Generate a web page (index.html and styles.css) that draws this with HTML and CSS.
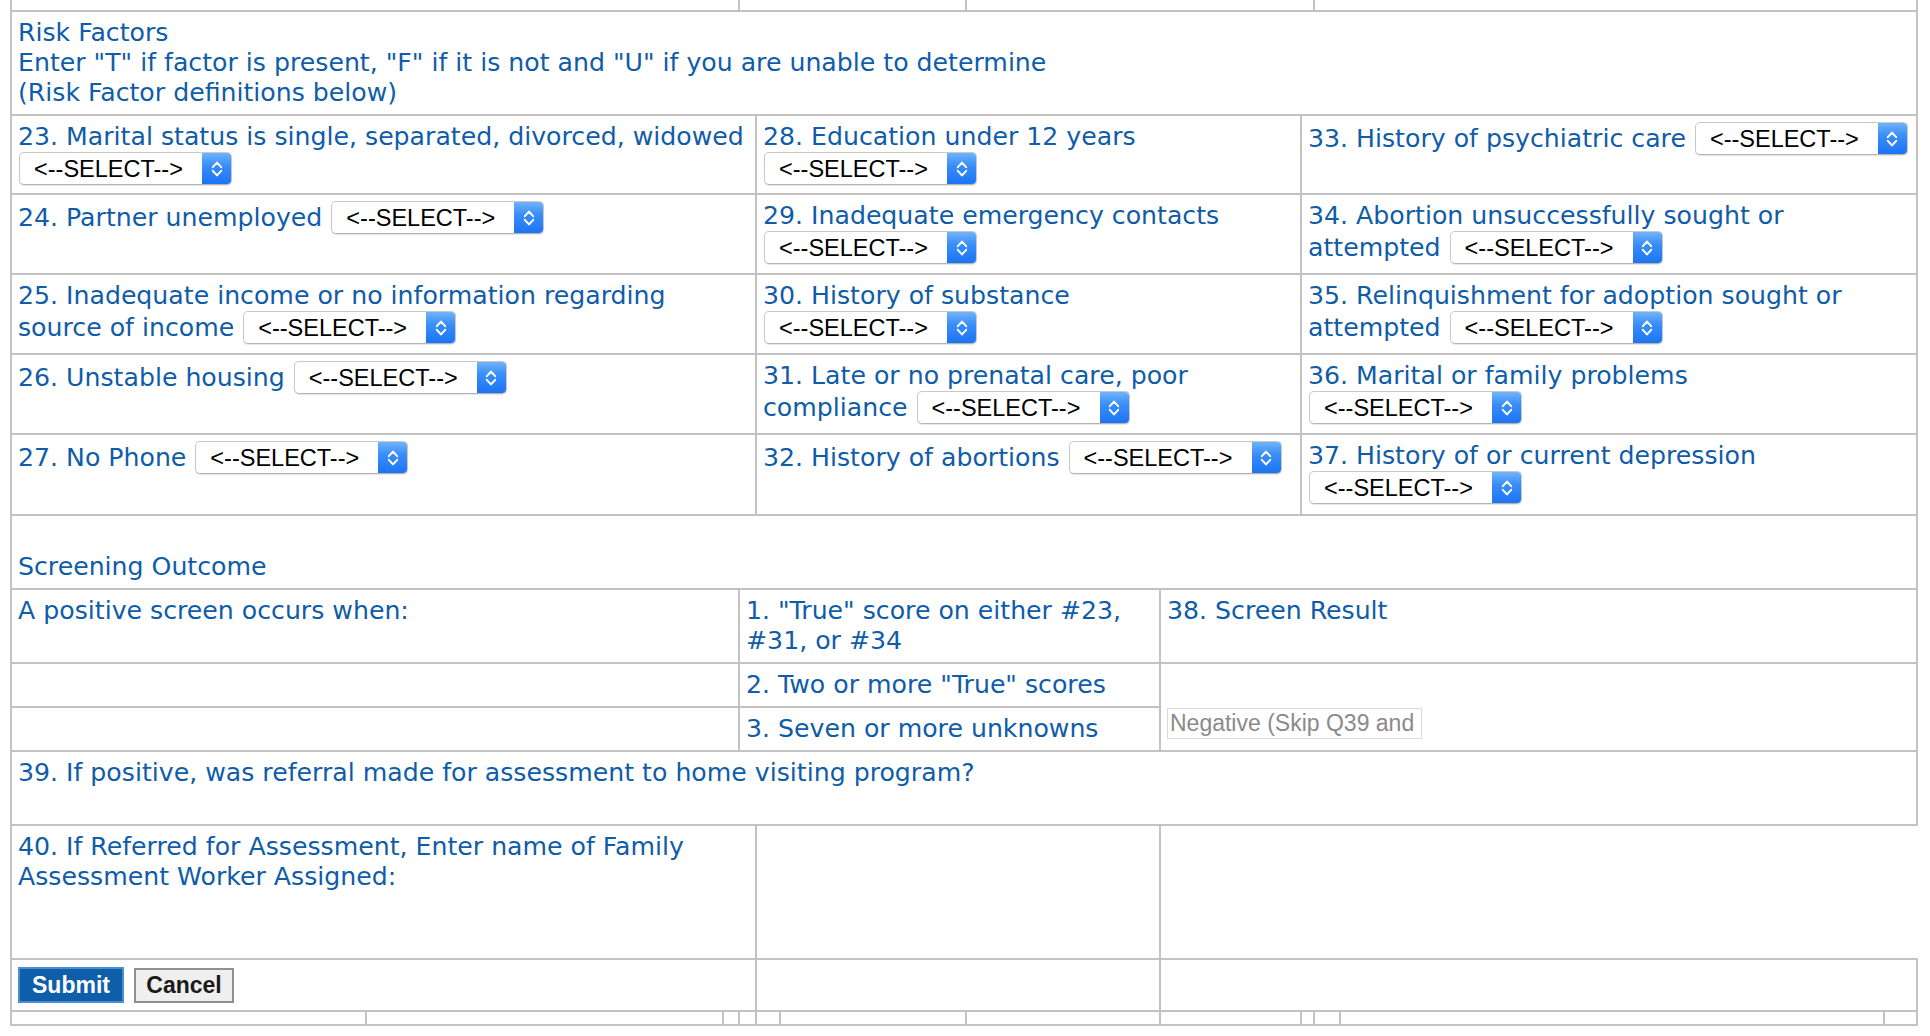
FILE: index.html
```html
<!DOCTYPE html>
<html lang="en">
<head>
<meta charset="utf-8">
<title>Risk Factors</title>
<link rel="stylesheet" href="styles.css">
</head>
<body>
<form class="page">
  <div class="sheet">
    <div class="cell edge top-a"></div>
    <div class="cell edge top-b"></div>
    <div class="cell edge top-c"></div>
    <div class="cell edge top-d"></div>

    <div class="cell full">Risk Factors<br>Enter "T" if factor is present, "F" if it is not and "U" if you are unable to determine<br>(Risk Factor definitions below)</div>

    <div class="cell risk-a">23. Marital status is single, separated, divorced, widowed<br><span class="pick"><select class="pick-input"><option>&lt;--SELECT--&gt;</option></select><span class="pick-btn"><svg class="chev" viewBox="0 0 12 22" width="12" height="22"><path d="M1.8 9.2 6 4.6l4.2 4.6M1.8 12.8 6 17.4l4.2-4.6" fill="none" stroke="#fff" stroke-width="2" stroke-linecap="round" stroke-linejoin="round"/></svg></span></span></div>
    <div class="cell risk-b">28. Education under 12 years<br><span class="pick"><select class="pick-input"><option>&lt;--SELECT--&gt;</option></select><span class="pick-btn"><svg class="chev" viewBox="0 0 12 22" width="12" height="22"><path d="M1.8 9.2 6 4.6l4.2 4.6M1.8 12.8 6 17.4l4.2-4.6" fill="none" stroke="#fff" stroke-width="2" stroke-linecap="round" stroke-linejoin="round"/></svg></span></span></div>
    <div class="cell risk-c">33. History of psychiatric care <span class="pick"><select class="pick-input"><option>&lt;--SELECT--&gt;</option></select><span class="pick-btn"><svg class="chev" viewBox="0 0 12 22" width="12" height="22"><path d="M1.8 9.2 6 4.6l4.2 4.6M1.8 12.8 6 17.4l4.2-4.6" fill="none" stroke="#fff" stroke-width="2" stroke-linecap="round" stroke-linejoin="round"/></svg></span></span></div>

    <div class="cell risk-a">24. Partner unemployed <span class="pick"><select class="pick-input"><option>&lt;--SELECT--&gt;</option></select><span class="pick-btn"><svg class="chev" viewBox="0 0 12 22" width="12" height="22"><path d="M1.8 9.2 6 4.6l4.2 4.6M1.8 12.8 6 17.4l4.2-4.6" fill="none" stroke="#fff" stroke-width="2" stroke-linecap="round" stroke-linejoin="round"/></svg></span></span></div>
    <div class="cell risk-b">29. Inadequate emergency contacts<br><span class="pick"><select class="pick-input"><option>&lt;--SELECT--&gt;</option></select><span class="pick-btn"><svg class="chev" viewBox="0 0 12 22" width="12" height="22"><path d="M1.8 9.2 6 4.6l4.2 4.6M1.8 12.8 6 17.4l4.2-4.6" fill="none" stroke="#fff" stroke-width="2" stroke-linecap="round" stroke-linejoin="round"/></svg></span></span></div>
    <div class="cell risk-c">34. Abortion unsuccessfully sought or<br>attempted <span class="pick"><select class="pick-input"><option>&lt;--SELECT--&gt;</option></select><span class="pick-btn"><svg class="chev" viewBox="0 0 12 22" width="12" height="22"><path d="M1.8 9.2 6 4.6l4.2 4.6M1.8 12.8 6 17.4l4.2-4.6" fill="none" stroke="#fff" stroke-width="2" stroke-linecap="round" stroke-linejoin="round"/></svg></span></span></div>

    <div class="cell risk-a">25. Inadequate income or no information regarding<br>source of income <span class="pick"><select class="pick-input"><option>&lt;--SELECT--&gt;</option></select><span class="pick-btn"><svg class="chev" viewBox="0 0 12 22" width="12" height="22"><path d="M1.8 9.2 6 4.6l4.2 4.6M1.8 12.8 6 17.4l4.2-4.6" fill="none" stroke="#fff" stroke-width="2" stroke-linecap="round" stroke-linejoin="round"/></svg></span></span></div>
    <div class="cell risk-b">30. History of substance<br><span class="pick"><select class="pick-input"><option>&lt;--SELECT--&gt;</option></select><span class="pick-btn"><svg class="chev" viewBox="0 0 12 22" width="12" height="22"><path d="M1.8 9.2 6 4.6l4.2 4.6M1.8 12.8 6 17.4l4.2-4.6" fill="none" stroke="#fff" stroke-width="2" stroke-linecap="round" stroke-linejoin="round"/></svg></span></span></div>
    <div class="cell risk-c">35. Relinquishment for adoption sought or<br>attempted <span class="pick"><select class="pick-input"><option>&lt;--SELECT--&gt;</option></select><span class="pick-btn"><svg class="chev" viewBox="0 0 12 22" width="12" height="22"><path d="M1.8 9.2 6 4.6l4.2 4.6M1.8 12.8 6 17.4l4.2-4.6" fill="none" stroke="#fff" stroke-width="2" stroke-linecap="round" stroke-linejoin="round"/></svg></span></span></div>

    <div class="cell risk-a">26. Unstable housing <span class="pick"><select class="pick-input"><option>&lt;--SELECT--&gt;</option></select><span class="pick-btn"><svg class="chev" viewBox="0 0 12 22" width="12" height="22"><path d="M1.8 9.2 6 4.6l4.2 4.6M1.8 12.8 6 17.4l4.2-4.6" fill="none" stroke="#fff" stroke-width="2" stroke-linecap="round" stroke-linejoin="round"/></svg></span></span></div>
    <div class="cell risk-b">31. Late or no prenatal care, poor<br>compliance <span class="pick"><select class="pick-input"><option>&lt;--SELECT--&gt;</option></select><span class="pick-btn"><svg class="chev" viewBox="0 0 12 22" width="12" height="22"><path d="M1.8 9.2 6 4.6l4.2 4.6M1.8 12.8 6 17.4l4.2-4.6" fill="none" stroke="#fff" stroke-width="2" stroke-linecap="round" stroke-linejoin="round"/></svg></span></span></div>
    <div class="cell risk-c">36. Marital or family problems<br><span class="pick"><select class="pick-input"><option>&lt;--SELECT--&gt;</option></select><span class="pick-btn"><svg class="chev" viewBox="0 0 12 22" width="12" height="22"><path d="M1.8 9.2 6 4.6l4.2 4.6M1.8 12.8 6 17.4l4.2-4.6" fill="none" stroke="#fff" stroke-width="2" stroke-linecap="round" stroke-linejoin="round"/></svg></span></span></div>

    <div class="cell risk-a">27. No Phone <span class="pick"><select class="pick-input"><option>&lt;--SELECT--&gt;</option></select><span class="pick-btn"><svg class="chev" viewBox="0 0 12 22" width="12" height="22"><path d="M1.8 9.2 6 4.6l4.2 4.6M1.8 12.8 6 17.4l4.2-4.6" fill="none" stroke="#fff" stroke-width="2" stroke-linecap="round" stroke-linejoin="round"/></svg></span></span></div>
    <div class="cell risk-b">32. History of abortions <span class="pick"><select class="pick-input"><option>&lt;--SELECT--&gt;</option></select><span class="pick-btn"><svg class="chev" viewBox="0 0 12 22" width="12" height="22"><path d="M1.8 9.2 6 4.6l4.2 4.6M1.8 12.8 6 17.4l4.2-4.6" fill="none" stroke="#fff" stroke-width="2" stroke-linecap="round" stroke-linejoin="round"/></svg></span></span></div>
    <div class="cell risk-c">37. History of or current depression<br><span class="pick"><select class="pick-input"><option>&lt;--SELECT--&gt;</option></select><span class="pick-btn"><svg class="chev" viewBox="0 0 12 22" width="12" height="22"><path d="M1.8 9.2 6 4.6l4.2 4.6M1.8 12.8 6 17.4l4.2-4.6" fill="none" stroke="#fff" stroke-width="2" stroke-linecap="round" stroke-linejoin="round"/></svg></span></span></div>

    <div class="cell full section">Screening Outcome</div>

    <div class="cell out-a">A positive screen occurs when:</div>
    <div class="cell out-b">1. "True" score on either #23,<br>#31, or #34</div>
    <div class="cell out-c">38. Screen Result</div>

    <div class="cell out-a"></div>
    <div class="cell out-b">2. Two or more "True" scores</div>
    <div class="cell out-c result-cell"><input class="result" type="text" value="Negative (Skip Q39 and" readonly></div>
    <div class="cell out-a"></div>
    <div class="cell out-b">3. Seven or more unknowns</div>

    <div class="cell full">39. If positive, was referral made for assessment to home visiting program?</div>

    <div class="cell end-a">40. If Referred for Assessment, Enter name of Family<br>Assessment Worker Assigned:</div>
    <div class="cell end-b"></div>
    <div class="cell end-c open-right"></div>

    <div class="cell end-a actions"><button type="submit" class="btn btn-submit">Submit</button><button type="button" class="btn btn-cancel">Cancel</button></div>
    <div class="cell end-b"></div>
    <div class="cell end-c"></div>

    <div class="cell edge"></div>
    <div class="cell edge"></div>
    <div class="cell edge"></div>
    <div class="cell edge"></div>
    <div class="cell edge"></div>
    <div class="cell edge"></div>
    <div class="cell edge"></div>
    <div class="cell edge"></div>
    <div class="cell edge"></div>
    <div class="cell edge"></div>
    <div class="cell edge"></div>
    <div class="cell edge"></div>
  </div>
</form>
</body>
</html>
```

FILE: styles.css
```css
* {
  box-sizing: border-box;
}

html, body {
  margin: 0;
  background: #ffffff;
}

body {
  font-family: "DejaVu Sans", "Lucida Grande", Verdana, sans-serif;
}

.page {
  margin: 0;
  padding-left: 10px;
}

.sheet {
  display: grid;
  width: 1908px;
  grid-template-columns: 355px 357px 16px 17px 24px 186px 194px 141px 13px 26px 544px 33px;
  grid-template-rows: 12px 104px 79px 80px 80px 80px 81px 74px 74px 44px 44px 74px 134px 52px 14px;
  border-left: 2px solid #c2c2c2;
  color: #0f5ca8;
  font-size: 25.2px;
  line-height: 30px;
}

.cell {
  border-right: 2px solid #c2c2c2;
  border-bottom: 2px solid #c2c2c2;
  padding: 6px 6px 0;
  white-space: nowrap;
  min-width: 0;
}

.edge {
  padding: 0;
}

.top-a { grid-column: 1 / 4; }
.top-b { grid-column: 4 / 7; }
.top-c { grid-column: 7 / 10; }
.top-d { grid-column: 10 / 13; }

.full { grid-column: 1 / 13; }

.risk-a { grid-column: 1 / 5; }
.risk-b { grid-column: 5 / 9; }
.risk-c { grid-column: 9 / 13; }

.out-a { grid-column: 1 / 4; }
.out-b { grid-column: 4 / 8; }
.out-c { grid-column: 8 / 13; }

.end-a { grid-column: 1 / 5; }
.end-b { grid-column: 5 / 8; }
.end-c { grid-column: 8 / 13; }

.section {
  display: flex;
  align-items: flex-end;
  padding-bottom: 6px;
}

.result-cell {
  grid-row: span 2;
  display: flex;
  align-items: flex-end;
  padding-bottom: 11px;
}

.open-right {
  border-right: 0;
}

/* select control */
.pick {
  display: inline-flex;
  vertical-align: baseline;
  width: 213px;
  height: 33px;
  margin-left: 1px;
  border: 1px solid #c9c9c9;
  border-bottom-color: #b4b4b4;
  border-radius: 5px;
  background: #ffffff;
  box-shadow: 0 1px 1px rgba(0, 0, 0, 0.10);
  overflow: hidden;
}

.pick-input {
  -webkit-appearance: none;
  appearance: none;
  flex: 1;
  min-width: 0;
  height: 31px;
  margin: 0;
  padding: 0 0 0 14px;
  border: 0;
  background: transparent;
  color: #000000;
  font-family: "Liberation Sans", Arial, Helvetica, sans-serif;
  font-size: 23.5px;
  outline: none;
}

.pick-btn {
  flex: 0 0 29px;
  display: flex;
  align-items: center;
  justify-content: center;
  background: linear-gradient(#6fb3fb 0%, #3a8ef8 40%, #1b74f4 100%);
}

.chev {
  display: block;
}

/* screen result field */
.result {
  width: 255px;
  height: 31px;
  margin: 0;
  padding: 0 2px;
  border: 1px solid #dcdcdc;
  background: #ffffff;
  color: #8a8a8a;
  font-family: "Liberation Sans", Arial, Helvetica, sans-serif;
  font-size: 23px;
  outline: none;
}

/* buttons */
.actions {
  display: flex;
  align-items: center;
  gap: 10px;
  padding: 0 6px;
}

.btn {
  margin: 0;
  padding: 0;
  font-family: "Liberation Sans", Arial, Helvetica, sans-serif;
  font-weight: bold;
  font-size: 23px;
  cursor: pointer;
}

.btn-submit {
  width: 106px;
  height: 36px;
  background: #0e5ea9;
  border: 2px solid #4a8fd2;
  color: #ffffff;
}

.btn-cancel {
  width: 100px;
  height: 35px;
  background: #efefef;
  border: 2px solid #8f8f8f;
  color: #1a1a1a;
}
```
